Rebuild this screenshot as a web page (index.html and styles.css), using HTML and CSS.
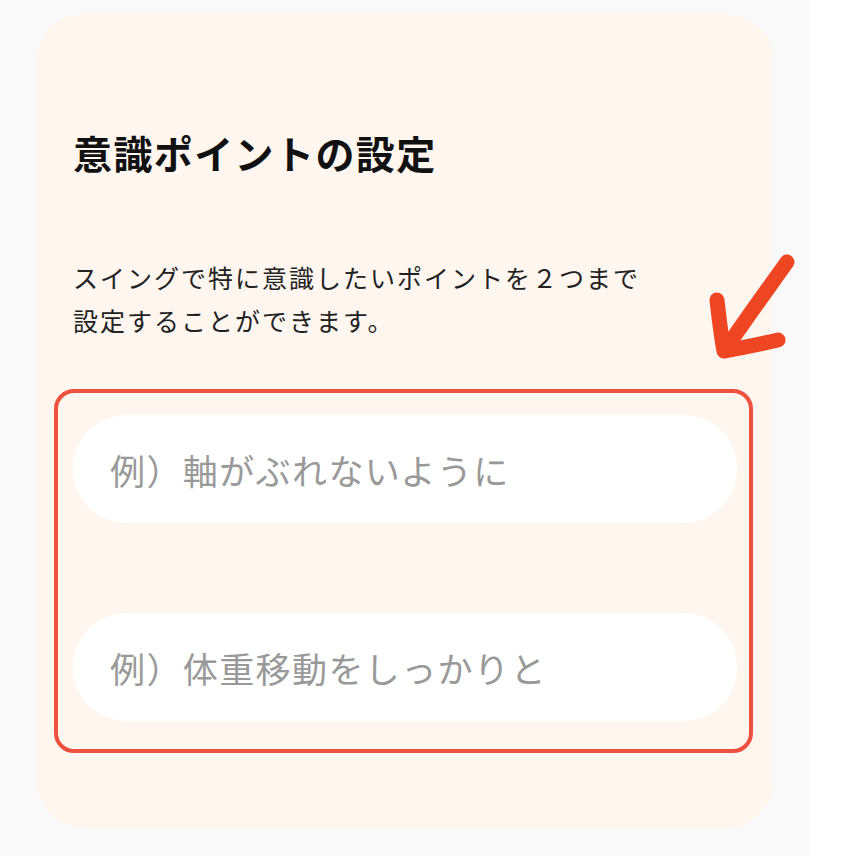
FILE: index.html
```html
<!DOCTYPE html>
<html lang="ja">
  <head>
    <meta charset="UTF-8" />
    <meta name="viewport" content="width=device-width, initial-scale=1.0" />
    <title>意識ポイントの設定</title>
    <link rel="stylesheet" href="styles.css">
  </head>
  <body>
    <div class="page">
      <div class="card">
        <h1>意識ポイントの設定</h1>
        <p class="desc">スイングで特に意識したいポイントを２つまで<br />設定することができます。</p>
        <div class="points">
          <input type="text" class="point-input" placeholder="例）軸がぶれないように" />
          <input type="text" class="point-input" placeholder="例）体重移動をしっかりと" />
        </div>
        <svg class="arrow" width="110" height="130" viewBox="0 0 110 130">
          <path d="M87 22 C70 46 45 80 25 110" />
          <path d="M17 60 C19 78 21 96 24 111 C42 108 60 104 78 100" />
        </svg>
      </div>
    </div>
  </body>
</html>
```

FILE: styles.css
```css
body {
  margin: 0;
  background-color: white;
  font-family: "Noto Sans CJK JP", "Noto Sans", sans-serif;
}
.page {
  width: 810px;
  height: 856px;
  padding: 14px 0 0 37px;
  box-sizing: border-box;
  background-color: #f9f9f9;
}
.card {
  position: relative;
  width: 736px;
  height: 814px;
  padding: 112px 0 0 36px;
  box-sizing: border-box;
  background-color: #fff6f0;
  border-radius: 46px;
}
h1 {
  margin: 0;
  font-size: 39px;
  line-height: 52px;
  font-weight: bold;
  letter-spacing: 1.4px;
  color: #111;
}
.desc {
  margin: 78px 0 0;
  font-size: 25px;
  line-height: 43px;
  letter-spacing: 2px;
  color: #222;
}
.points {
  display: flex;
  flex-direction: column;
  gap: 90px;
  width: 699px;
  margin: 47px 0 0 -19px;
  padding: 22px 12px 28px 15px;
  box-sizing: border-box;
  border: 4px solid #ef5141;
  border-radius: 20px;
}
.point-input {
  height: 108px;
  padding: 0 0 0 37px;
  border: none;
  border-radius: 54px;
  background-color: white;
  font-family: inherit;
  font-size: 35px;
  letter-spacing: 1.4px;
  color: #333;
  outline: none;
}
.point-input::placeholder {
  color: #999;
}
.arrow {
  position: absolute;
  left: 663px;
  top: 226px;
  fill: none;
  stroke: #ee4623;
  stroke-width: 15;
  stroke-linecap: round;
  stroke-linejoin: round;
}
```
